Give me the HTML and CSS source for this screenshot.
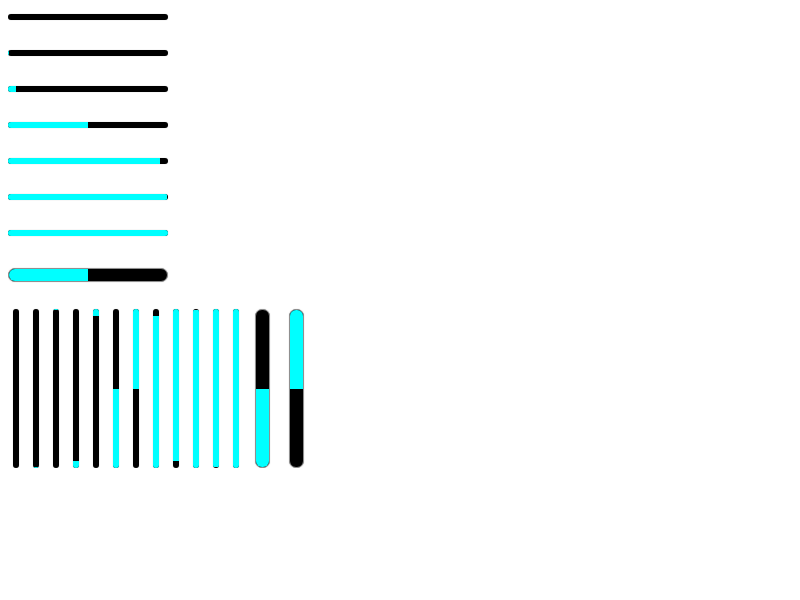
FILE: index.html
```html
<!DOCTYPE html>
<html lang="en">
<head>
  <meta charset="UTF-8">
  <title>Progress Bars</title>
  <link rel="stylesheet" href="styles.css">
</head>
<body>
  <div class="hbars">
    <div class="hbar"><div class="fill" style="width: 0px"></div></div>
    <div class="hbar"><div class="fill" style="width: 1px"></div></div>
    <div class="hbar"><div class="fill" style="width: 8px"></div></div>
    <div class="hbar"><div class="fill" style="width: 80px"></div></div>
    <div class="hbar"><div class="fill" style="width: 152px"></div></div>
    <div class="hbar"><div class="fill" style="width: 159px"></div></div>
    <div class="hbar"><div class="fill" style="width: 160px"></div></div>
    <div class="hbar wide"><div class="fill" style="width: 79px"></div></div>
  </div>

  <div class="vbars">
    <div class="vbar up"><div class="fill" style="height: 0px"></div></div>
    <div class="vbar up"><div class="fill" style="height: 1px"></div></div>
    <div class="vbar down"><div class="fill" style="height: 1px"></div></div>
    <div class="vbar up"><div class="fill" style="height: 7px"></div></div>
    <div class="vbar down"><div class="fill" style="height: 7px"></div></div>
    <div class="vbar up"><div class="fill" style="height: 79px"></div></div>
    <div class="vbar down"><div class="fill" style="height: 80px"></div></div>
    <div class="vbar up"><div class="fill" style="height: 152px"></div></div>
    <div class="vbar down"><div class="fill" style="height: 152px"></div></div>
    <div class="vbar up"><div class="fill" style="height: 158px"></div></div>
    <div class="vbar down"><div class="fill" style="height: 158px"></div></div>
    <div class="vbar up"><div class="fill" style="height: 159px"></div></div>
    <div class="vbar up wide first"><div class="fill" style="height: 78px"></div></div>
    <div class="vbar down wide second"><div class="fill" style="height: 79px"></div></div>
  </div>
</body>
</html>
```

FILE: styles.css
```css
body {
  margin: 8px;
  background: #fff;
  font-family: 'Liberation Sans', Arial, sans-serif;
}

.hbars {
  display: flex;
  flex-direction: column;
  gap: 30px;
  padding-top: 6px;
  width: 160px;
}

.hbar {
  display: flex;
  width: 160px;
  height: 6px;
  background: #000;
  border-radius: 3px;
  overflow: hidden;
  box-shadow: 0 0 1px rgba(128,128,128,0.6);
}

.hbar.wide {
  box-sizing: border-box;
  height: 14px;
  margin-top: 2px;
  border-radius: 7px;
  border: 1px solid #8f8f8f;
}

.fill {
  background: #0ff;
  flex-shrink: 0;
}

.hbar .fill {
  height: 100%;
}

.vbars {
  display: flex;
  gap: 14px;
  margin-top: 27px;
  padding-left: 5px;
}

.vbar {
  display: flex;
  flex-direction: column;
  width: 6px;
  height: 159px;
  background: #000;
  border-radius: 3px;
  overflow: hidden;
  box-shadow: 0 0 1px rgba(128,128,128,0.6);
}

.vbar .fill {
  width: 100%;
}

.vbar.up {
  justify-content: flex-end;
}

.vbar.down {
  justify-content: flex-start;
}

.vbar.wide {
  box-sizing: border-box;
  width: 15px;
  border-radius: 7px;
  border: 1px solid #8f8f8f;
}

.vbar.first {
  margin-left: 2px;
}

.vbar.second {
  margin-left: 5px;
}
```
